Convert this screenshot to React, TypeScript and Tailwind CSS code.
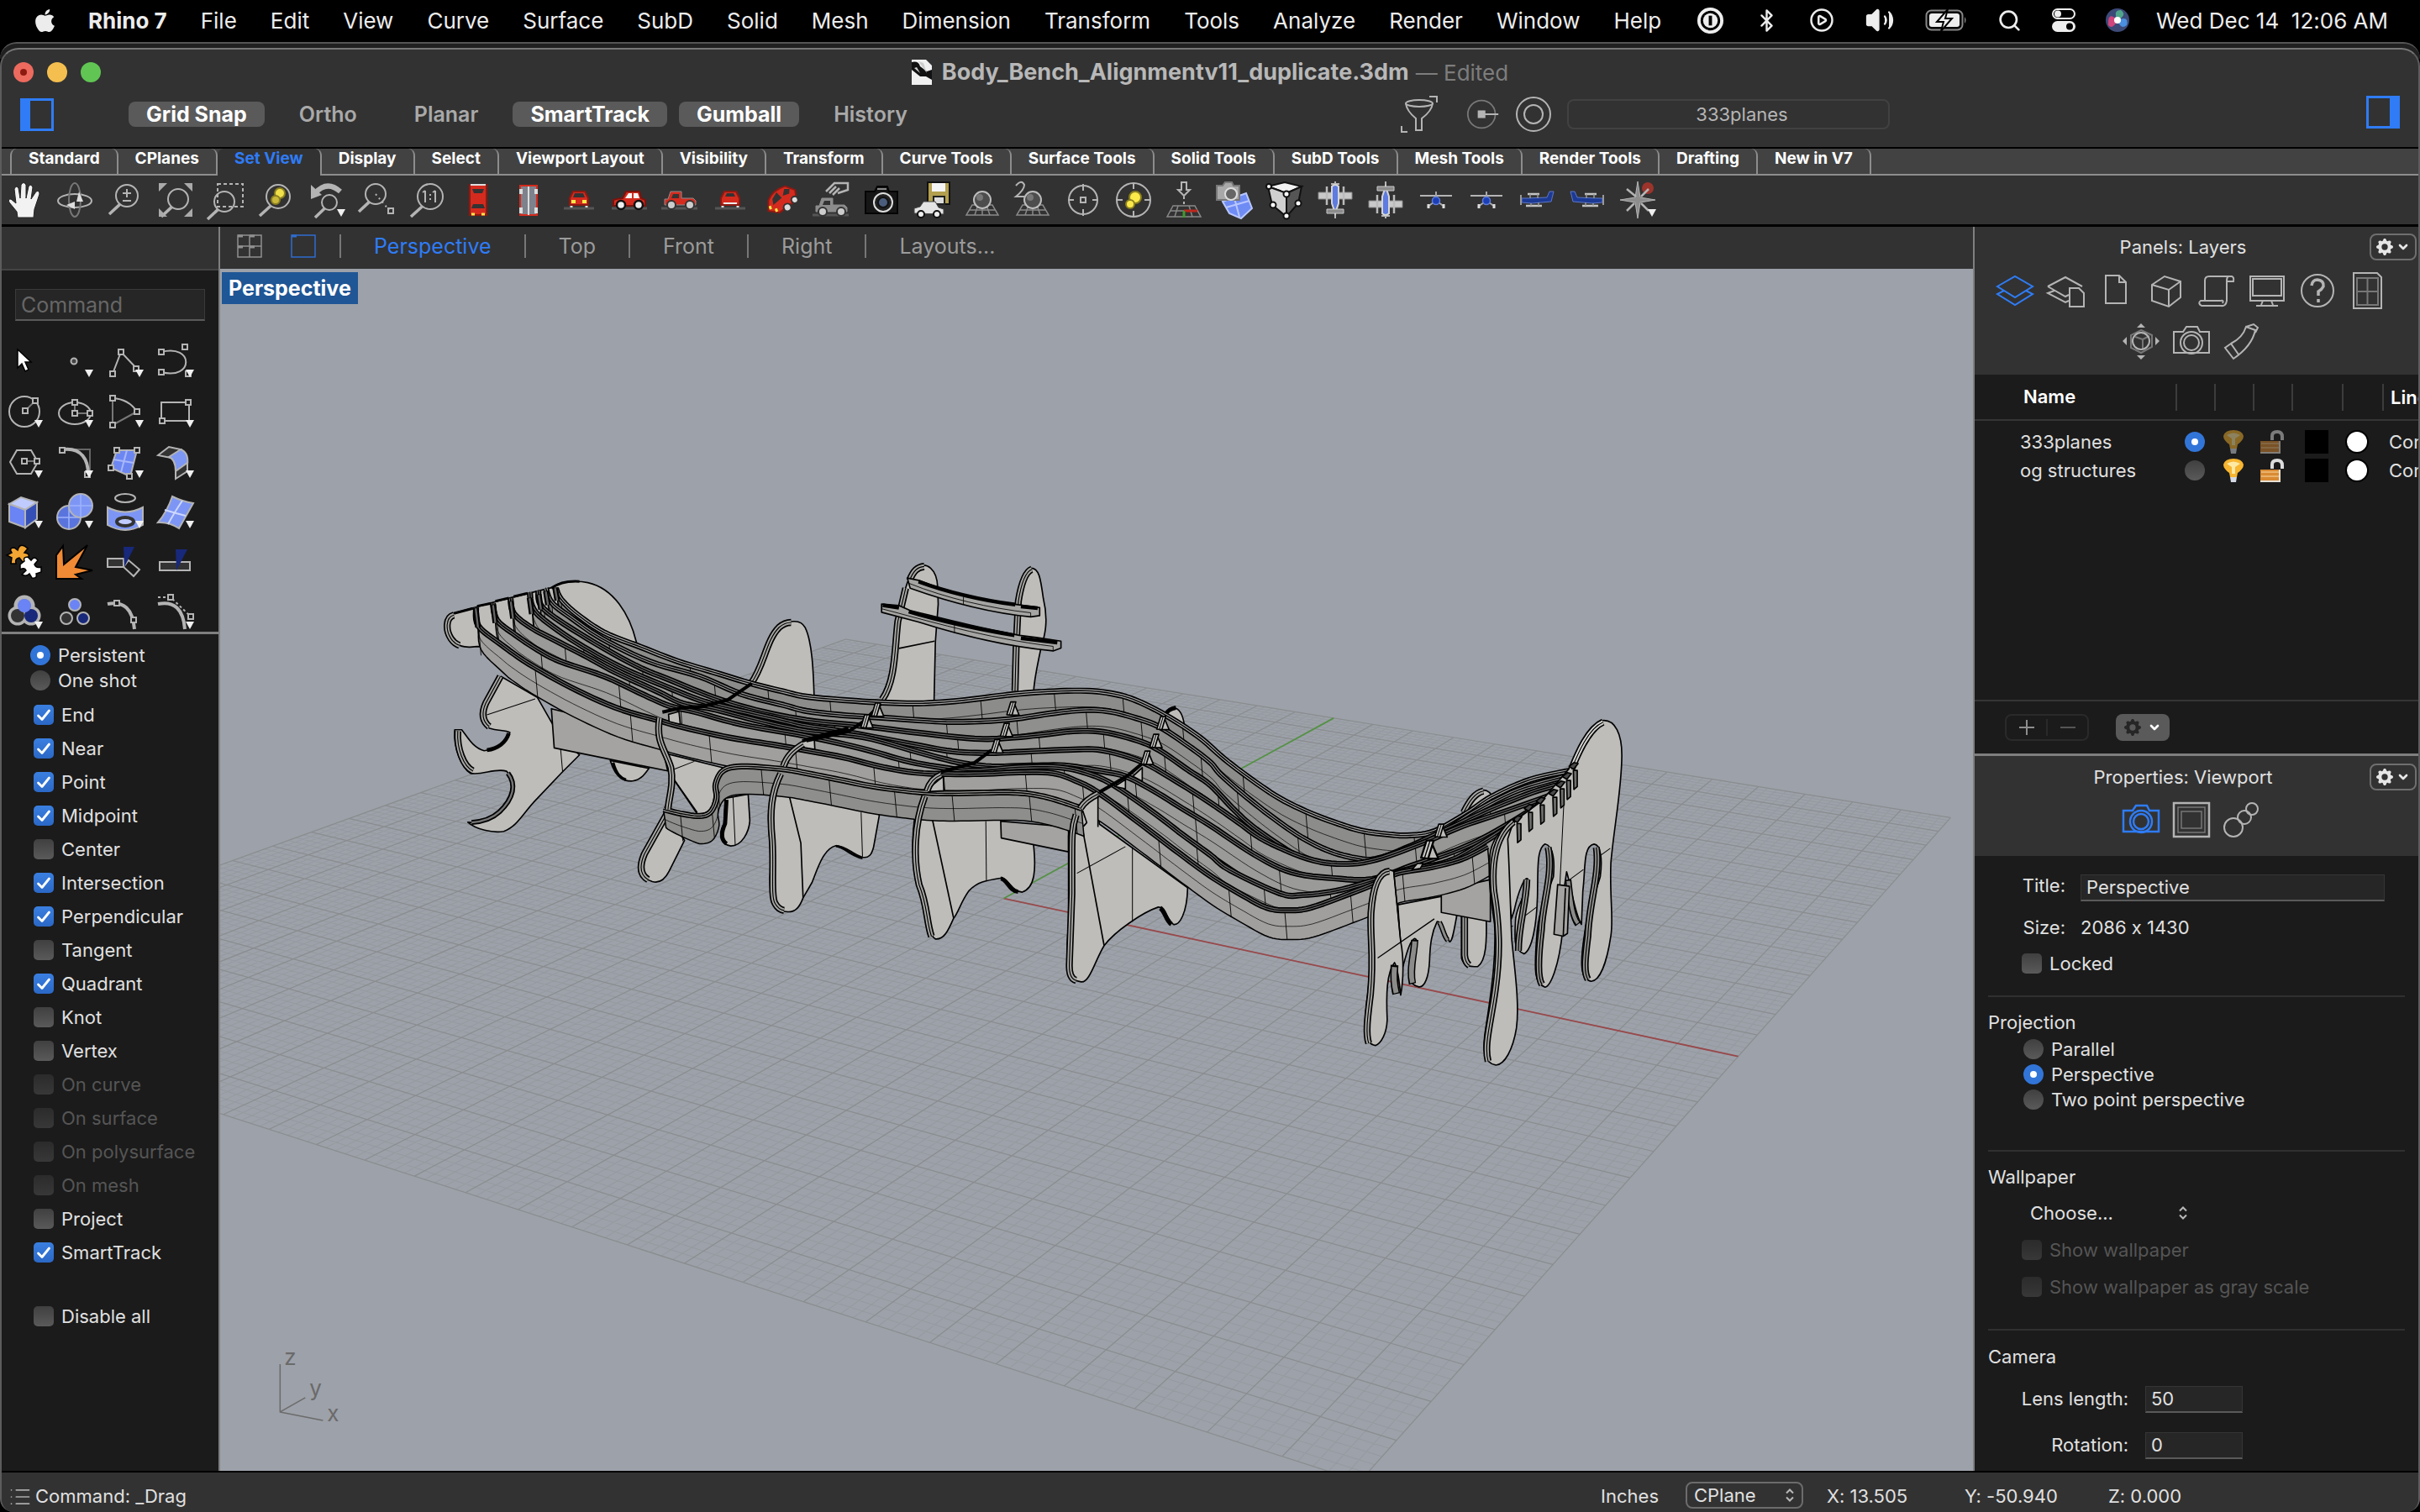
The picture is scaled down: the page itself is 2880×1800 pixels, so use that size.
import type { ReactNode } from 'react'
import { useState } from 'react'
import clsx from 'clsx'
import { Bluetooth, CirclePlay, Volume2, Search, ChevronDown, List } from 'lucide-react'
import { FaApple } from 'react-icons/fa'
import { BsGearFill } from 'react-icons/bs'

type Pt = [number, number]

const MENUS = ['File', 'Edit', 'View', 'Curve', 'Surface', 'SubD', 'Solid', 'Mesh', 'Dimension', 'Transform', 'Tools', 'Analyze', 'Render', 'Window', 'Help']

const TOOL_TABS = [
  'Standard', 'CPlanes', 'Set View', 'Display', 'Select', 'Viewport Layout', 'Visibility', 'Transform',
  'Curve Tools', 'Surface Tools', 'Solid Tools', 'SubD Tools', 'Mesh Tools', 'Render Tools', 'Drafting', 'New in V7',
]

const OSNAPS: { label: string; on?: boolean; disabled?: boolean }[] = [
  { label: 'End', on: true },
  { label: 'Near', on: true },
  { label: 'Point', on: true },
  { label: 'Midpoint', on: true },
  { label: 'Center' },
  { label: 'Intersection', on: true },
  { label: 'Perpendicular', on: true },
  { label: 'Tangent' },
  { label: 'Quadrant', on: true },
  { label: 'Knot' },
  { label: 'Vertex' },
  { label: 'On curve', disabled: true },
  { label: 'On surface', disabled: true },
  { label: 'On polysurface', disabled: true },
  { label: 'On mesh', disabled: true },
  { label: 'Project' },
  { label: 'SmartTrack', on: true },
]

/* ---------- form controls ---------- */

function Check({ label, on, disabled, className }: { label: string; on?: boolean; disabled?: boolean; className?: string }) {
  return (
    <label className={clsx('flex items-center gap-[9px]', disabled ? 'text-[#555]' : 'text-[#e0e0e0]', className)}>
      <span className="relative grid place-items-center">
        <input
          type="checkbox"
          defaultChecked={on}
          disabled={disabled}
          className="peer size-6 appearance-none rounded-[5px] bg-linear-to-b from-[#404040] to-[#5a5a5a] checked:from-[#3a7fe0] checked:to-[#2b68c6] disabled:from-[#2b2b2b] disabled:to-[#383838]"
        />
        <svg viewBox="0 0 24 24" className="pointer-events-none absolute hidden size-6 peer-checked:block">
          <path d="M5.500 13 L10 17.500 L18.500 7" fill="none" stroke="#fff" strokeWidth="2.800" strokeLinecap="round" strokeLinejoin="round" />
        </svg>
      </span>
      {label}
    </label>
  )
}

const radioClass =
  'size-6 shrink-0 appearance-none rounded-full bg-linear-to-b from-[#404040] to-[#5a5a5a] checked:border-[8px] checked:border-[#3275d8] checked:bg-white checked:bg-none'

function Radio({ label, name, on }: { label: string; name: string; on?: boolean }) {
  return (
    <label className="flex h-[30px] items-center gap-[9px] text-[#e0e0e0]">
      <input type="radio" name={name} defaultChecked={on} className={radioClass} />
      {label}
    </label>
  )
}

function UpDown() {
  return (
    <svg viewBox="0 0 12 18" className="h-[18px] w-3" fill="none" stroke="#b8b8b8" strokeWidth="2">
      <path d="M2 6.500 L6 2.500 L10 6.500 M2 11.500 L6 15.500 L10 11.500" />
    </svg>
  )
}

function GearButton({ label }: { label: string }) {
  return (
    <button aria-label={label} className="flex h-8 w-14 items-center justify-center gap-1 rounded-lg border-2 border-[#6f6f6f] text-[#e6e6e6]">
      <BsGearFill size={20} />
      <ChevronDown size={16} strokeWidth={4} />
    </button>
  )
}

/* ---------- icons ---------- */

function Ico({ label, children, sub, size = 'size-11' }: { label: string; children: ReactNode; sub?: boolean; size?: string }) {
  return (
    <button aria-label={label} className={clsx('shrink-0', size)}>
      <svg viewBox="0 0 44 44" className="size-full overflow-visible" fill="none" stroke="#b4b4b4" strokeWidth="2">
        {children}
        {sub && <path d="M34 33 H44 L39 42Z" fill="#f0f0f0" stroke="none" />}
      </svg>
    </button>
  )
}

function Lens({ cx = 24, cy = 17, r = 13 }: { cx?: number; cy?: number; r?: number }) {
  return (
    <>
      <circle cx={cx} cy={cy} r={r} />
      <path d={`M${cx - r * 0.65} ${cy + r * 0.8} L${cx - r - 8} ${cy + r + 9}`} strokeWidth="3.500" />
    </>
  )
}

function SideCar() {
  return (
    <g stroke="none">
      <path d="M1 32 H43" stroke="#555" strokeWidth="3" />
      <path d="M3 29 V22 Q10 20 14 20 L18 12 H34 L36 20 L41 22 V29Z" fill="#d42b1e" stroke="#7c130c" />
      <path d="M17 20 L21 14 H25 V20Z M27 20 V14 H32 L34 20Z" fill="#f5f5f5" />
      <circle cx="12" cy="28" r="5" fill="#eee" stroke="#111" strokeWidth="2.500" />
      <circle cx="33" cy="28" r="5" fill="#eee" stroke="#111" strokeWidth="2.500" />
    </g>
  )
}

function Truck({ color = '#d42b1e', y = 0 }: { color?: string; y?: number }) {
  return (
    <g transform={`translate(0 ${y})`}>
      <path d="M0 32 H43" stroke="#555" strokeWidth="3" />
      <path d="M4 28 V21 H8 L11 12 H24 V20 H38 L41 23 V28Z" fill={color} stroke="#8c8c8c" strokeWidth="1" />
      <path d="M12 20 L14 15 H21 V20Z" fill="#333" stroke="none" />
      <circle cx="12" cy="28" r="5" fill="#ccc" stroke="#333" />
      <circle cx="34" cy="28" r="5" fill="#ccc" stroke="#333" />
    </g>
  )
}

function Ball() {
  return (
    <>
      <path d="M10 28 H34 L41 40 H3Z M7 34 H37 M17 28 L13 40 M22 28 V40 M27 28 L31 40" stroke="#8a8a8a" strokeWidth="1.500" />
      <circle cx="22" cy="22" r="10" fill="#4d4d4d" stroke="#bdbdbd" />
      <circle cx="19" cy="19" r="4" fill="#777" stroke="none" />
    </>
  )
}

function FrontPlane() {
  return (
    <>
      <path d="M3 17 H41" strokeWidth="2" />
      <path d="M22 12 V22 M19 25 L12 30 M25 25 L32 30" stroke="#a8a8a8" strokeWidth="2" />
      <circle cx="22" cy="23" r="4.500" fill="#1c3fb4" stroke="#5d7be0" strokeWidth="1.500" />
      <path d="M13 27 V32 M31 27 V32" stroke="#ddd" strokeWidth="3" />
    </>
  )
}

function SidePlane({ flip }: { flip?: boolean }) {
  return (
    <g transform={flip ? 'translate(44 0) scale(-1 1)' : undefined}>
      <path d="M4 20 H10 L34 19 L37 12 H42 L39 24 L16 26 L4 25Z" fill="#1c3a94" stroke="#5d77c8" strokeWidth="1" />
      <path d="M11 15 H25 M9 29 H28" stroke="#c4c4c4" strokeWidth="2.500" />
      <path d="M14 15 V20 M23 15 V20 M15 26 V29 M24 25 V29" stroke="#999" strokeWidth="1.500" />
      <path d="M3 16 V28" stroke="#999" />
    </g>
  )
}

function TopPlane({ up }: { up?: boolean }) {
  return (
    <g transform={up ? 'rotate(180 22 22)' : undefined}>
      <path d="M17 3 H27 M22 0 V44" strokeWidth="2" />
      <path d="M2 13 H42 V21 H2Z" fill="#c9c9c9" stroke="#888" strokeWidth="1" />
      <path d="M12 6 V28 M32 6 V28" stroke="#bbb" strokeWidth="2.500" />
      <path d="M18 6 Q22 2 26 6 L26 26 L22 38 L18 26Z" fill="#5d7be0" stroke="#d5d5d5" />
      <path d="M12 33 H32 V38 H12Z" fill="#8b8b8b" stroke="#c9c9c9" strokeWidth="1" />
    </g>
  )
}

const VIEW_TOOLS: { label: string; sub?: boolean; art: ReactNode }[] = [
  {
    label: 'Pan view',
    art: <path d="M14 43 L13 36 L4 25 Q2 21 6 21 L12 26 L10 9 Q12 4 15 8 L17 20 L18 4 Q21 -1 24 4 L24 20 L27 6 Q30 2 32 7 L30 21 L36 12 Q40 10 40 15 L34 33 L33 43Z" fill="#f2f2f2" stroke="#222" strokeWidth="1" />,
  },
  {
    label: 'Rotate view',
    art: (
      <>
        <ellipse cx="22" cy="23" rx="20" ry="8" />
        <ellipse cx="22" cy="22" rx="7" ry="20" stroke="#777" />
        <path d="M27 12 L32 24 L24 24Z M22 24 L12 28 L22 33Z" fill="#ddd" stroke="none" />
      </>
    ),
  },
  { label: 'Zoom dynamic', art: <><Lens /><path d="M19 14 H29 M24 9 V19 M19 23 H29" /></> },
  { label: 'Zoom extents', art: <><Lens cx={25} cy={21} r={12} /><path d="M2 2 H12 L2 12Z M42 2 V12 L32 2Z M2 42 V32 L12 42Z M42 42 H32 L42 32Z" fill="#aaa" stroke="none" /></> },
  { label: 'Zoom window', art: <><Lens cx={20} cy={24} r={12} /><path d="M12 3 H42 V30 H12Z" strokeDasharray="4 3" /></> },
  { label: 'Zoom selected', art: <><Lens cx={24} cy={18} r={14} /><circle cx="26" cy="14" r="6" fill="#f0e04a" stroke="#8a7f1f" /><circle cx="21" cy="22" r="5" fill="#c9b83a" stroke="#8a7f1f" /></> },
  {
    label: 'Undo view change',
    sub: true,
    art: <><Lens cx={25} cy={25} r={9} /><path d="M8 14 Q22 -2 38 12" strokeWidth="6" /><path d="M3 4 L16 16 L3 21Z" fill="#b4b4b4" stroke="none" /></>,
  },
  { label: 'Zoom target', art: <><Lens cx={20} cy={15} r={12} /><path d="M20 15 L36 34" strokeDasharray="2 4" /><path d="M35 32 H41 V38 H35Z" /></> },
  { label: 'Zoom 1 to 1', art: <><Lens cx={25} cy={18} r={15} /><path d="M19 11 V25 M31 11 V25 M16 13 L19 11 M28 13 L31 11 M25 15 V17 M25 20 V22" /></> },
  {
    label: 'Top view',
    art: (
      <>
        <path d="M12 4 H32 V40 H12Z" fill="#d42b1e" stroke="#8c1a12" />
        <path d="M15 9 H29 L27 14 H17Z M16 27 H28 L30 32 H14Z" fill="#333" stroke="none" />
        <path d="M13 4 H31" stroke="#ddd" />
        <path d="M14 39 H18 M26 39 H30" stroke="#f7e948" strokeWidth="3" />
      </>
    ),
  },
  {
    label: 'Bottom view',
    art: (
      <>
        <path d="M12 5 H32 V40 H12Z" fill="#7e828c" stroke="#d42b1e" />
        <path d="M22 6 V40" stroke="#ddd" />
        <path d="M13 9 V15 M31 9 V15 M13 31 V38 M31 31 V38" stroke="#ddd" strokeWidth="4" />
      </>
    ),
  },
  {
    label: 'Front view',
    art: (
      <>
        <path d="M4 32 H40" stroke="#555" strokeWidth="3" />
        <path d="M13 27 V31 M31 27 V31" stroke="#ddd" strokeWidth="3" />
        <path d="M11 28 V20 L15 12 H29 L33 20 V28Z" fill="#d42b1e" stroke="#8c1a12" />
        <path d="M15 19 L17 14 H27 L29 19Z" fill="#333" stroke="none" />
        <path d="M13 24 H18 M26 24 H31" stroke="#f7e948" strokeWidth="4" />
      </>
    ),
  },
  { label: 'Right view', art: <SideCar /> },
  { label: 'Left view', art: <Truck /> },
  {
    label: 'Back view',
    art: (
      <>
        <path d="M4 32 H40" stroke="#555" strokeWidth="3" />
        <path d="M13 27 V31 M31 27 V31" stroke="#ddd" strokeWidth="3" />
        <path d="M11 28 V20 L15 12 H29 L33 20 V28Z" fill="#d42b1e" stroke="#8c1a12" />
        <path d="M16 18 L18 14 H26 L28 18Z" fill="#333" stroke="none" />
        <path d="M14 26 H30" stroke="#eee" />
      </>
    ),
  },
  {
    label: 'Perspective view',
    art: (
      <g transform="rotate(-18 22 22)">
        <path d="M4 30 L8 18 Q16 8 32 8 L42 16 L40 28 L16 36Z" fill="#d42b1e" stroke="#8c1a12" />
        <path d="M13 18 L20 12 L24 20 L12 25Z" fill="#333" stroke="none" />
        <path d="M26 18 L30 11 L36 13 L34 18Z" fill="#333" stroke="none" />
        <circle cx="27" cy="33" r="4.500" fill="#ddd" stroke="#333" />
        <circle cx="38" cy="27" r="4" fill="#ddd" stroke="#333" />
        <path d="M6 27 H9 M12 32 H15" stroke="#f7e948" strokeWidth="4" />
      </g>
    ),
  },
  { label: 'Place camera', art: <><Truck color="#8c8c8c" y={8} /><path d="M16 12 L26 2 H42 V10 L30 14 M20 14 L28 6 M24 16 L32 8" strokeWidth="2.500" /></> },
  {
    label: 'Named views',
    art: (
      <>
        <path d="M3 12 H14 L17 6 H29 L31 12 H41 V38 H3Z" fill="#161616" stroke="#050505" />
        <path d="M17 9 H28" stroke="#888" />
        <circle cx="24" cy="25" r="11" fill="#222" stroke="#ddd" />
        <circle cx="24" cy="25" r="6" fill="#4b5d7c" stroke="#111" />
      </>
    ),
  },
  {
    label: 'Save view',
    art: (
      <>
        <path d="M17 1 H43 V27 H17Z" fill="#b39f4e" stroke="#111" />
        <path d="M22 2 H38 V12 H22Z" fill="#f5f5f5" stroke="none" />
        <path d="M24 18 H37 V27 H24Z" fill="#ddd" stroke="#222" />
        <path d="M1 38 V32 L8 30 L12 24 H26 L30 31 L36 33 V39Z" fill="#e4e4e4" stroke="#444" strokeWidth="1" />
        <circle cx="9" cy="39" r="4" fill="#eee" stroke="#111" />
        <circle cx="28" cy="39" r="4" fill="#eee" stroke="#111" />
      </>
    ),
  },
  { label: 'One point perspective', art: <Ball /> },
  { label: 'Two point perspective', art: <><Ball /><path d="M2 5 Q9 -3 12 4 Q12 10 2 18 H14" /></> },
  { label: 'Set target', art: <><circle cx="22" cy="22" r="17" /><path d="M22 3 V11 M22 33 V41 M4 22 H11 M33 22 H40 M19 19 H25 V25 H19Z" /></> },
  { label: 'Target selected', art: <><circle cx="22" cy="22" r="20" /><path d="M22 2 V9 M22 35 V42 M2 22 H9 M35 22 H42" /><circle cx="24" cy="19" r="7" fill="#fbe94a" stroke="#8a7f1f" /><circle cx="18" cy="27" r="5" fill="#fbe94a" stroke="#8a7f1f" /></> },
  {
    label: 'Plan view',
    art: (
      <>
        <path d="M19 1 H25 V10 H29 L22 17 L15 10 H19Z" />
        <path d="M22 18 V28" strokeDasharray="3 3" />
        <path d="M9 29 H35 L42 42 H2Z M6 35 H38 M15 29 L11 42 M28 29 L32 42" stroke="#888" strokeWidth="1.500" />
        <path d="M22 35 H38" stroke="#c0261c" strokeWidth="3" />
        <path d="M22 35 V43" stroke="#3f9a2f" strokeWidth="3" />
      </>
    ),
  },
  {
    label: 'Camera from surface',
    art: (
      <>
        <path d="M8 24 L36 14 L43 32 L30 44 L16 38Z" fill="#6f8cf5" stroke="#b9c7ff" />
        <path d="M12 31 L40 23 M22 20 L28 42" stroke="#b9c7ff" />
        <path d="M1 5 H8 L11 1 H19 L21 5 H28 V22 H1Z" fill="#a8a8a8" stroke="#777" />
        <circle cx="18" cy="15" r="7" fill="#666" stroke="#ddd" />
      </>
    ),
  },
  {
    label: 'Match perspective',
    art: (
      <>
        <path d="M2 6 L22 1 L42 6 L24 14Z" fill="#f2f2f2" stroke="#111" />
        <path d="M2 6 L24 14 V42 L7 28Z" fill="#cfcfcf" stroke="#111" />
        <path d="M42 6 L24 14 V42 L38 26Z" fill="#555" stroke="#111" />
        <g fill="#fff" stroke="#111">
          <circle cx="3" cy="6" r="3" /><circle cx="24" cy="15" r="3.500" /><circle cx="8" cy="28" r="3.500" /><circle cx="38" cy="26" r="3.500" /><circle cx="24" cy="41" r="3.500" />
        </g>
      </>
    ),
  },
  { label: 'Plane top', art: <TopPlane /> },
  { label: 'Plane bottom', art: <TopPlane up /> },
  { label: 'Plane front', art: <FrontPlane /> },
  { label: 'Plane back', art: <FrontPlane /> },
  { label: 'Plane right', art: <SidePlane /> },
  { label: 'Plane left', art: <SidePlane flip /> },
  {
    label: 'Sun direction',
    sub: true,
    art: (
      <>
        <circle cx="34" cy="8" r="7" fill="#9c342c" stroke="none" />
        <path d="M22 0 L25 19 L43 22 L25 25 L22 44 L19 25 L1 22 L19 19Z" fill="#8d8d8d" strokeWidth="1" />
        <path d="M9 9 L20 18 M35 9 L26 18 M9 35 L18 26 M35 35 L26 26" strokeWidth="2.500" />
      </>
    ),
  },
]

/* small square grip used all over the palette icons */
function Grip({ x, y }: { x: number; y: number }) {
  return <rect x={x - 3} y={y - 3} width="6" height="6" fill="#1b1b1b" />
}

const PALETTE: { label: string; sub?: boolean; art: ReactNode }[] = [
  { label: 'Select', art: <path d="M14 9 L30 24 L23 24 L27 33 L23 35 L19 26 L14 31Z" fill="#fff" stroke="#000" strokeWidth="1.500" /> },
  { label: 'Point', sub: true, art: <circle cx="21" cy="23" r="3.500" fill="#444" /> },
  { label: 'Polyline', sub: true, art: <><path d="M7 38 L17 12 L36 32" /><Grip x={7} y={38} /><Grip x={17} y={12} /><Grip x={35} y={32} /></> },
  { label: 'Curve', sub: true, art: <><path d="M5 12 C44 2 44 46 5 36" /><Grip x={5} y={12} /><Grip x={5} y={36} /><Grip x={33} y={6} /><Grip x={37} y={38} /></> },
  { label: 'Circle', sub: true, art: <><circle cx="22" cy="23" r="18" /><path d="M23 22 L35 10" stroke="#777" /><Grip x={23} y={22} /><Grip x={35} y={10} /></> },
  { label: 'Ellipse', sub: true, art: <><ellipse cx="22" cy="25" rx="19" ry="13" /><path d="M22 12 V25 H40" stroke="#777" /><Grip x={22} y={12} /><Grip x={22} y={25} /><Grip x={40} y={25} /></> },
  { label: 'Arc', sub: true, art: <><path d="M7 7 Q26 8 36 23" /><path d="M7 7 V39 L36 23" stroke="#777" /><Grip x={7} y={7} /><Grip x={7} y={39} /><Grip x={36} y={23} /></> },
  { label: 'Rectangle', sub: true, art: <><rect x="5" y="12" width="33" height="22" /><Grip x={37} y={12} /><Grip x={6} y={34} /></> },
  { label: 'Polygon', sub: true, art: <><path d="M5 23 L13 9 H30 L38 23 L30 37 H13Z" /><path d="M22 22 H38" stroke="#777" /><Grip x={22} y={22} /><Grip x={37} y={22} /></> },
  { label: 'Fillet', sub: true, art: <><path d="M9 8 H40 V40" stroke="#666" /><path d="M9 8 C30 6 38 20 38 38" strokeWidth="4" /><Grip x={7} y={9} /><Grip x={37} y={38} /></> },
  { label: 'Surface', sub: true, art: <><path d="M12 9 H36 L28 40 L5 30Z" fill="#6d87f2" /><path d="M8 20 L32 24 M24 9 L17 35" stroke="#a9b8fa" /><Grip x={12} y={9} /><Grip x={36} y={9} /><Grip x={5} y={30} /><Grip x={27} y={40} /></> },
  { label: 'Sweep', sub: true, art: <><path d="M1 15 L14 5 L28 8 L16 18Z" fill="#333" /><path d="M28 8 Q38 12 36 26 L22 34 Q22 20 14 17Z" fill="#7d97f5" /><path d="M22 34 L36 24 V34 L22 43Z" fill="#333" /></> },
  { label: 'Box', sub: true, art: <><path d="M4 13 L18 5 L37 11 L23 20Z" fill="#c0ccff" /><path d="M4 13 L23 20 V41 L4 34Z" fill="#6a83f5" /><path d="M37 11 L23 20 V41 L37 31Z" fill="#3550b5" /></> },
  { label: 'Sphere', sub: true, art: <><circle cx="15" cy="29" r="14" fill="#5a74dd" /><path d="M15 15 V43 M1 29 H29" stroke="#9fb2fb" strokeWidth="1.500" /><circle cx="29" cy="15" r="14" fill="#7d96f5" /><path d="M29 1 V29 M15 15 H43" stroke="#9fb2fb" strokeWidth="1.500" /></> },
  { label: 'Revolve', sub: true, art: <><ellipse cx="22" cy="6" rx="12" ry="5" /><path d="M1 17 Q22 28 43 17 V38 Q22 50 1 38Z" fill="#7d96f5" /><ellipse cx="22" cy="34" rx="10" ry="5" fill="#c0ccff" stroke="#333" strokeWidth="4" /></> },
  { label: 'Mesh', sub: true, art: <><path d="M18 4 Q30 10 43 12 L26 42 Q14 34 1 35 Q12 22 18 4Z" fill="#7d96f5" /><path d="M9 20 Q22 24 34 27 M30 9 Q20 24 13 37" stroke="#cdd7ff" /></> },
  {
    label: 'Join',
    art: (
      <>
        <path d="M1 14 L7 11 Q3 5 10 5 L14 8 Q16 0 22 3 L26 6 L22 11 Q30 12 26 18 L20 22 L16 17 Q10 18 12 24 L6 24 L7 17Z" fill="#f2a532" stroke="#000" strokeWidth="1.500" />
        <path d="M17 25 L22 21 Q20 16 26 16 L30 20 Q34 14 38 20 L34 25 Q36 30 42 28 L42 34 L36 36 Q38 42 31 41 L28 36 Q24 40 19 37 L24 32 Q22 28 17 31Z" fill="#fff" stroke="#000" strokeWidth="1.500" />
      </>
    ),
  },
  { label: 'Explode', art: <path d="M0 42 V14 L8 3 L9 25 L37 2 L23 28 L43 32 L23 37 L30 42Z" fill="#f08a35" stroke="#000" /> },
  { label: 'Trim', art: <><path d="M1 18 H20 V28 H1Z" fill="#333" /><path d="M26 20 L39 31 L32 39 L20 28Z" /><path d="M20 4 H33 L21 28Z" fill="#18287a" stroke="none" /></> },
  { label: 'Split', art: <><path d="M3 22 H39 V32 H3Z" fill="#333" /><path d="M22 7 H36 L23 32Z" fill="#18287a" stroke="none" /></> },
  { label: 'Group', sub: true, art: <><g strokeWidth="5"><circle cx="22" cy="14" r="10" /><circle cx="14" cy="26" r="9" /><circle cx="30" cy="26" r="9" /></g><circle cx="14" cy="26" r="8" fill="#333" stroke="none" /><circle cx="30" cy="26" r="8" fill="#18287a" stroke="none" /><circle cx="22" cy="14" r="8" fill="#6a83f5" stroke="none" /></> },
  { label: 'Ungroup', art: <><circle cx="22" cy="13" r="7" fill="#6a83f5" /><circle cx="12" cy="29" r="7" fill="#333" /><circle cx="32" cy="29" r="7" fill="#18287a" /></> },
  { label: 'Edit points', art: <><path d="M1 12 Q30 6 33 42" strokeWidth="4" /><Grip x={12} y={11} /><Grip x={32} y={31} /></> },
  { label: 'Control points', sub: true, art: <><path d="M1 12 Q30 6 33 42" strokeWidth="4" /><path d="M1 4 H16 L40 27" strokeDasharray="3 3" /><Grip x={16} y={4} /><Grip x={40} y={27} /></> },
]

const PANEL_ICONS: { label: string; active?: boolean; art: ReactNode }[] = [
  { label: 'Layers', active: true, art: <path d="M1 17 L22 5 L43 17 L22 30Z M9 22 L1 26 L22 39 L43 26 L35 22" /> },
  { label: 'Layer states', art: <><path d="M1 17 L22 6 L42 17 M1 17 L22 29 L26 27 M9 22 L1 25 L22 36 L26 34" /><path d="M27 19 H38 L44 25 V41 H27Z" /></> },
  { label: 'Notes', art: <path d="M10 4 H26 L34 12 V37 H10Z M26 4 V12 H34" /> },
  { label: 'Object', art: <path d="M5 15 L20 5 L39 11 V30 L25 41 L5 34Z M5 15 L25 21 L39 11 M25 21 V41" /> },
  { label: 'Script', art: <path d="M8 34 V10 Q8 5 13 5 H40 Q43 6 42 11 H34 Q34 6 36 5 M34 11 V34 Q33 41 27 40 H4 Q-1 37 3 34 H27 Q31 33 29 37" /> },
  { label: 'Display', art: <path d="M2 5 H42 V34 H2Z M5 8 H39 V28 H5Z M17 34 L15 39 M27 34 L29 39 M9 40 H35" /> },
  { label: 'Help', art: <><circle cx="22" cy="22" r="19" /><path d="M15 16 Q16 9 22 9 Q30 10 29 17 Q27 21 23 23 V28 M23 32 V36" strokeWidth="3.500" /></> },
  { label: 'Page layout', art: <><path d="M5 1 H33 L38 6 V43 H5Z" /><path d="M9 7 H34 V39 H9Z M21.500 7 V39 M9 23 H34" stroke="#777" /></> },
]

const PANEL_ICONS_2: { label: string; art: ReactNode }[] = [
  { label: 'Block', art: <><path d="M22 9 L35 15 V29 L22 36 L10 30 V15Z M15 17 L24 20 V32 M24 20 L32 16" stroke="#777" /><circle cx="22" cy="22" r="10" /><path d="M17 6 H27 L22 1Z M17 39 H27 L22 44Z M5 17 V27 L0 22Z M39 17 V27 L44 22Z" fill="#b4b4b4" stroke="none" /></> },
  { label: 'Named view camera', art: <Camera /> },
  { label: 'Materials', art: <><path d="M9 25 Q23 18 27 5 L38 9 Q34 28 12 43 L2 30Z M9 25 L18 38 M27 5 L36 2 L41 6 L38 12" /></> },
]

function Camera() {
  return (
    <>
      <path d="M1 11 H12 L16 5 H29 L32 11 H43 V36 H1Z" />
      <circle cx="22" cy="24" r="13" />
      <circle cx="22" cy="24" r="9" />
    </>
  )
}

/* ---------- viewport scene ---------- */

// ground plane -> screen, u and v run from -1 to 1 over the grid extents
function project(u: number, v: number): Pt {
  const w = -0.14455 * u + 0.24007 * v + 1
  return [(574.4 * u + 773.3 * v + 1194.7) / w, (6.3 * u - 9.36 * v + 1069) / w]
}

function seg(a: Pt, b: Pt) {
  return `M${a[0].toFixed(1)} ${a[1].toFixed(1)}L${b[0].toFixed(1)} ${b[1].toFixed(1)}`
}

function Grid() {
  let minor = ''
  let major = ''
  for (let i = -70; i <= 70; i++) {
    const t = i / 70
    const d = seg(project(t, -1), project(t, 1)) + seg(project(-1, t), project(1, t))
    if (i % 5 === 0) major += d
    else minor += d
  }
  return (
    <g fill="none">
      <path d={minor} stroke="#959aa0" strokeWidth="1" />
      <path d={major} stroke="#898d8f" strokeWidth="1.200" />
      <path d={seg(project(0, 0), project(1, 0))} stroke="#98494b" strokeWidth="1.800" />
      <path d={seg(project(0, 0), project(0, 1))} stroke="#559246" strokeWidth="1.800" />
    </g>
  )
}

function spline(pts: Pt[], steps = 6): Pt[] {
  const out: Pt[] = []
  for (let i = 0; i < pts.length - 1; i++) {
    const p0 = pts[Math.max(0, i - 1)]
    const p1 = pts[i]
    const p2 = pts[i + 1]
    const p3 = pts[Math.min(pts.length - 1, i + 2)]
    for (let s = 0; s < steps; s++) {
      const t = s / steps
      const f = (k: 0 | 1) =>
        0.5 * (2 * p1[k] + (p2[k] - p0[k]) * t + (2 * p0[k] - 5 * p1[k] + 4 * p2[k] - p3[k]) * t * t + (3 * p1[k] - p0[k] - 3 * p2[k] + p3[k]) * t * t * t)
      out.push([f(0), f(1)])
    }
  }
  out.push(pts[pts.length - 1])
  return out
}

const line = (pts: Pt[]) => 'M' + pts.map((p) => `${p[0].toFixed(1)} ${p[1].toFixed(1)}`).join('L')

function Slat({ pts, fill, depth = 35, edge = '#686868' }: { pts: Pt[]; fill: string; depth?: number; edge?: string }) {
  const top = spline(pts)
  const low = top.map(([x, y], i): Pt => [x + 3, y + Math.min(depth, 22 + i)])
  const mid = top.map(([x, y], i): Pt => [x + 2, y + Math.min(depth, 22 + i) * 0.55])
  const ticks = top.filter((_, i) => i % 13 === 6).map(([x, y]) => seg([x, y], [x + 3, y + depth])).join('')
  return (
    <g fill="none" stroke="#000">
      <path d={line([...top, ...low.slice().reverse()]) + 'Z'} fill={fill} strokeWidth="1.500" />
      <path d={line(mid)} strokeWidth="0.700" />
      <path d={ticks} strokeWidth="0.900" />
      <path d={line(top)} strokeWidth="7.200" />
      <path d={line(top)} stroke={edge} strokeWidth="3.800" />
      <path d={line(top)} strokeWidth="1.400" />
    </g>
  )
}

const SLATS: { fill: string; edge?: string; pts: Pt[] }[] = [
  {
    fill: '#8c8c8a',
    edge: '#a4a4a4',
    pts: [
      [662, 700], [668, 713], [687, 731], [720, 753], [763, 770], [807, 787], [850, 800], [893, 813], [933, 823], [960, 829], [1003, 833], [1050, 836], [1093, 837], [1130, 835], [1167, 831], [1207, 826],
      [1247, 823], [1293, 822], [1327, 826], [1353, 834], [1387, 851], [1427, 877], [1457, 903], [1490, 928], [1523, 950], [1560, 968], [1598, 982], [1623, 989], [1653, 993], [1678, 994], [1707, 989],
      [1745, 968], [1775, 948], [1820, 928], [1868, 917],
    ],
  },
  {
    fill: '#8f8f8d',
    edge: '#8e8e8e',
    pts: [
      [650, 700], [657, 717], [680, 735], [717, 760], [773, 787], [833, 805], [883, 826], [933, 839], [960, 846], [1003, 851], [1050, 854], [1093, 857], [1133, 859], [1173, 858], [1210, 855], [1250, 849],
      [1287, 845], [1317, 846], [1347, 853], [1380, 865], [1415, 888], [1440, 907], [1453, 922], [1483, 948], [1515, 973], [1550, 997], [1583, 1013], [1613, 1021], [1637, 1022], [1680, 1008], [1717, 990],
      [1757, 965], [1807, 940], [1862, 924],
    ],
  },
  {
    fill: '#959593',
    pts: [
      [641, 703], [648, 725], [700, 760], [757, 792], [800, 810], [850, 830], [900, 845], [960, 857], [1027, 864], [1093, 872], [1160, 879], [1200, 878], [1243, 874], [1277, 870], [1313, 871], [1353, 881],
      [1380, 893], [1415, 917], [1440, 934], [1468, 963], [1490, 983], [1523, 1006], [1550, 1021], [1590, 1029], [1633, 1024], [1680, 1006], [1730, 983], [1773, 963], [1823, 943], [1857, 933],
    ],
  },
  {
    fill: '#979795',
    pts: [
      [631, 705], [634, 722], [647, 737], [687, 765], [737, 793], [783, 813], [833, 833], [870, 843], [930, 857], [960, 864], [1013, 872], [1093, 887], [1133, 894], [1177, 896], [1227, 894], [1277, 892],
      [1313, 893], [1360, 907], [1407, 934], [1440, 955], [1473, 978], [1505, 1000], [1557, 1022], [1597, 1028], [1637, 1023], [1693, 1003], [1740, 983], [1790, 966], [1849, 945],
    ],
  },
  {
    fill: '#9a9a98',
    pts: [
      [608, 712], [612, 730], [633, 747], [667, 765], [700, 782], [733, 800], [783, 823], [813, 837], [850, 844], [900, 857], [960, 870], [1027, 877], [1093, 895], [1140, 907], [1180, 912], [1227, 911],
      [1267, 911], [1307, 917], [1340, 924], [1373, 941], [1407, 962], [1440, 982], [1493, 1017], [1537, 1038], [1587, 1045], [1633, 1046], [1680, 1030], [1730, 1013], [1773, 993], [1833, 957],
    ],
  },
  {
    fill: '#9c9c9a',
    pts: [
      [587, 718], [592, 738], [613, 755], [640, 773], [667, 787], [720, 805], [767, 827], [797, 840], [827, 847], [883, 862], [960, 876], [1027, 891], [1077, 905], [1120, 913], [1160, 917], [1213, 913],
      [1260, 913], [1293, 920], [1325, 934], [1377, 970], [1407, 993], [1440, 1017], [1463, 1035], [1523, 1063], [1550, 1065], [1590, 1060], [1633, 1048], [1673, 1035], [1717, 1027], [1753, 1010], [1820, 967],
    ],
  },
  {
    fill: '#a09f9d',
    pts: [
      [567, 723], [570, 745], [597, 767], [630, 790], [680, 818], [733, 842], [783, 857], [820, 867], [870, 878], [920, 886], [960, 893], [1003, 901], [1047, 912], [1087, 919], [1123, 921], [1167, 921],
      [1213, 919], [1253, 920], [1280, 929], [1307, 943], [1353, 977], [1403, 1015], [1440, 1042], [1473, 1062], [1507, 1080], [1533, 1083], [1560, 1080], [1607, 1063], [1640, 1050], [1663, 1039], [1703, 1032],
      [1740, 1022], [1770, 1007],
    ],
  },
]

const LOW_SLAT: Pt[] = [
  [790, 963], [810, 968], [833, 971], [846, 966], [853, 950], [852, 933], [861, 917], [883, 912], [930, 915], [960, 920], [1000, 928], [1035, 935], [1070, 940], [1100, 943], [1133, 944], [1188, 943], [1220, 944],
  [1247, 949], [1273, 957], [1287, 962],
]

// strip of plate thickness: dark outline, lit face, centre seam
function Rim({ d, tone = '#a6a6a4' }: { d: string; tone?: string }) {
  return (
    <g fill="none" stroke="#000">
      <path d={d} strokeWidth="25" />
      <path d={d} stroke={tone} strokeWidth="15" />
      <path d={d} strokeWidth="3.500" />
    </g>
  )
}

function Stub({ x, y }: { x: number; y: number }) {
  return (
    <g transform={`translate(${x} ${y})`} stroke="#000" strokeWidth="5">
      <path d="M8 -20 L26 22 L-2 22Z" fill="#bdbcb9" />
      <path d="M-18 20 L-4 -24 H14 L0 22Z" fill="#c8c8c6" />
      <path d="M-9 20 L5 -24" strokeWidth="3" />
    </g>
  )
}

const PLATE = '#bebdba'

function HeadBack() {
  return (
    <g transform="translate(500 650) scale(0.33333)" stroke="#000" strokeWidth="5" fill={PLATE}>
      <path d="M120 240 L300 190 L470 148 C500 125 560 122 600 130 C690 150 750 240 775 350 L600 380 L205 358 L180 360 C130 362 105 330 100 290 C98 260 105 245 120 240Z" />
      <Rim d="M122 246 C92 254 92 300 112 330 C120 342 130 350 142 354" />
      <path d="M680 765 C700 830 730 840 760 838 C790 835 805 810 818 793Z" />
      <path d="M690 772 C702 815 716 826 736 834" strokeWidth="10" fill="none" />
      <path d="M290 465 L240 560 C215 600 225 640 250 650 C280 660 305 655 322 665 C310 700 280 725 230 730 C190 720 170 680 150 655 L125 655 C120 720 150 790 180 810 C220 820 270 790 310 803 C350 840 340 900 290 950 C250 985 210 990 172 985 C200 1010 260 1025 300 1018 C350 1000 370 950 420 900 L510 805 L570 745 L500 680 L420 540Z" />
      <path d="M240 602 L412 545 M503 725 L510 805" strokeWidth="3" />
      <Rim d="M288 465 L236 560 C218 600 226 626 248 644" />
      <Rim d="M136 660 C132 722 156 786 190 802" />
      <path d="M318 668 C308 700 280 722 240 728" fill="none" strokeWidth="14" />
      <path d="M315 810 C346 850 335 900 285 948 C255 976 220 984 185 986" fill="none" strokeWidth="18" />
      <path d="M315 810 C346 850 335 900 285 948 C255 976 220 984 185 986" fill="none" strokeWidth="7" stroke="#777" />
      <path d="M470 580 L480 720 L885 802 L862 700 L550 600Z" fill="#a4a3a1" />
      <path d="M1185 490 C1230 430 1240 330 1290 285 C1320 262 1360 262 1375 290 C1400 340 1405 440 1408 560 L1190 530Z" />
      <Rim d="M1182 490 C1228 430 1236 335 1282 290 C1300 274 1312 272 1325 272" />
      <path d="M880 740 L1080 790 L1056 850 C1048 920 1050 960 990 955 L905 830Z" />
      <path d="M905 830 L990 950" />
      <path d="M908 796 L980 768" strokeWidth="3" />
      <path d="M1090 900 L1085 990 C1060 1040 1080 1065 1110 1070 C1150 1070 1175 1020 1178 980 L1172 885Z" />
      <path d="M1118 895 L1126 1068" strokeWidth="3" />
      <path d="M1095 905 L1090 990 C1072 1030 1078 1050 1095 1062" strokeWidth="14" fill="none" />
      <path d="M880 950 L800 1100 C775 1150 780 1180 830 1197 C860 1205 880 1180 890 1160 L945 1050Z" />
      <Rim d="M882 955 L802 1098 C784 1140 784 1172 815 1190" />
      <path d="M1290 800 L1500 830 L1640 960 L1622 1060 C1615 1105 1600 1114 1580 1110 C1545 1100 1520 1068 1485 1069 C1440 1080 1420 1150 1400 1200 L1368 1255 C1355 1290 1340 1305 1315 1305 C1270 1305 1250 1280 1250 1180 C1260 1100 1240 1000 1245 950 C1255 880 1270 830 1290 800Z" />
      <path d="M1300 815 L1360 1060 L1368 1255" fill="none" />
      <path d="M1575 950 L1580 1108" strokeWidth="3" />
    </g>
  )
}

function MidBack() {
  return (
    <g transform="translate(960 650) scale(0.33333 0.34435)" stroke="#000" strokeWidth="5" fill={PLATE}>
      <path d="M265 545 C320 460 315 370 330 270 C345 180 350 120 390 75 C430 50 465 80 468 140 L470 200 L460 330 L455 545Z" />
      <path d="M330 353 L457 328" />
      <Rim d="M270 530 C318 465 314 360 326 260 L354 145" />
      <Rim d="M368 118 C382 84 396 72 420 70" />
      <path d="M745 510 L748 200 C760 120 780 80 800 76 C830 75 835 110 845 180 C865 260 850 310 835 360 C820 430 812 460 810 510Z" />
      <Rim d="M744 500 L748 350 L756 190 C766 130 782 88 804 80" />
      <path d="M360 110 L400 118 C520 165 650 190 760 203 L832 212 V240 L800 244 C650 230 500 190 370 145Z" fill="#a5a5a3" />
      <path d="M400 122 C520 165 640 188 745 202 M765 208 L825 214" strokeWidth="13" fill="none" />
      <path d="M365 128 C500 180 650 214 800 230 V244 M560 175 V200" strokeWidth="2.500" fill="none" />
      <path d="M268 200 L330 205 L370 222 C440 238 480 250 540 262 C640 286 700 296 760 308 L820 315 L908 328 V352 L880 362 C700 345 540 305 400 262 L268 228Z" fill="#a5a5a3" />
      <path d="M272 204 L330 213 M365 226 C480 260 640 292 742 308 M765 318 L895 333" strokeWidth="13" fill="none" />
      <path d="M268 216 C420 254 640 318 880 346 V362 M528 272 V300" strokeWidth="2.500" fill="none" />
      <path d="M1275 590 C1295 545 1340 540 1350 630Z" />
      <path d="M1278 585 C1288 566 1302 560 1318 558" strokeWidth="14" fill="none" />
      <path d="M430 860 L450 940 L690 940 L810 1030 C820 1120 815 1180 770 1195 C730 1195 720 1140 690 1147 C640 1155 610 1160 580 1190 C550 1230 540 1270 525 1285 C505 1330 490 1360 460 1357 C430 1340 430 1260 400 1170 C370 1070 375 960 400 880Z" />
      <path d="M434 875 L525 1285" />
      <path d="M640 950 L642 1155" strokeWidth="3" />
      <path d="M693 1148 C715 1150 722 1190 755 1194" strokeWidth="14" fill="none" />
      <path d="M105 1036 C140 1040 160 1072 200 1078" strokeWidth="8" fill="none" />
      <path d="M693 950 L695 1008 L935 1056 V970Z" fill="#a4a3a1" />
      <path d="M975 905 L1040 850 L1045 960 L1360 1180 C1358 1270 1330 1310 1310 1307 C1285 1290 1280 1245 1255 1247 C1200 1265 1100 1330 1062 1380 C1030 1430 1010 1510 980 1505 C920 1500 925 1440 935 1300 V1000 C945 940 950 920 975 905Z" />
      <path d="M980 950 L1062 1380" />
      <path d="M965 1130 L1138 1038 M1163 1040 V1297" strokeWidth="3" />
      <path d="M1262 1250 C1280 1260 1280 1290 1302 1306" strokeWidth="16" fill="none" />
    </g>
  )
}

function FootBack() {
  return (
    <g transform="translate(1440 800) scale(0.33333)" stroke="#000" strokeWidth="5" fill={PLATE}>
      <path d="M897 860 V1020 C905 1050 930 1052 955 1050 C985 1030 988 960 985 870Z" />
      <Rim d="M908 872 V1010 C910 1030 916 1040 925 1046" />
      <path d="M670 830 L825 800 L880 870 C870 920 865 960 855 962 C835 930 830 890 810 890 C790 930 785 970 783 1030 C780 1090 765 1125 745 1123 C710 1115 705 1090 715 1020 C735 970 745 955 730 950 C710 960 700 1010 685 1060Z" />
      <path d="M730 955 C728 1010 710 1060 722 1112" strokeWidth="26" fill="none" />
      <path d="M730 960 C728 1010 710 1060 722 1108" strokeWidth="17" stroke="#8b8b89" fill="none" />
      <path d="M818 892 C830 910 835 945 848 956" strokeWidth="18" fill="none" />
      <path d="M818 892 C830 910 835 945 848 956" strokeWidth="9" stroke="#8b8b89" fill="none" />
      <path d="M825 780 V857 L1000 890 V740Z" fill="#a4a3a1" />
      <path d="M900 500 C930 440 960 415 985 422 C1005 430 1010 450 1008 470 L920 530Z" />
      <Rim d="M905 500 C925 460 945 430 975 424" />
    </g>
  )
}

function HeadFront() {
  return (
    <g transform="translate(500 650) scale(0.33333)" stroke="#000" strokeWidth="5" fill={PLATE}>
      <Rim d="M856 612 C842 700 874 720 896 790 C908 850 888 900 886 940" />
      <path d="M866 592 L930 578 L1010 572 L1100 548 L1185 490" fill="none" strokeWidth="12" />
      <path d="M888 600 L925 590 L930 636 L890 626Z" />
      <path d="M1370 692 L1408 690 L1410 725 L1350 715Z" />
      <Rim d="M1368 706 C1330 730 1310 750 1298 785" />
      <path d="M1365 695 L1450 670 L1530 650" fill="none" strokeWidth="12" />
      <Rim d="M1288 812 C1254 880 1248 950 1258 1050 C1264 1150 1252 1250 1268 1275 C1276 1290 1288 1298 1300 1300" />
      {[200, 262, 325, 392, 425, 450, 483].map((x, i) => (
        <g key={x} fill="none">
          <path d={`M${x} ${220 - i * 12} L${x + 8} ${290 - i * 16}`} strokeWidth="20" />
          <path d={`M${x} ${222 - i * 12} L${x + 8} ${290 - i * 16}`} strokeWidth="7" stroke="#666" />
        </g>
      ))}
      <path d="M122 240 L190 222 M205 214 L255 204 M270 196 L318 185 M335 180 L385 168 M470 150 C500 128 540 124 570 126" fill="none" strokeWidth="9" />
    </g>
  )
}

function MidFront() {
  return (
    <g transform="translate(960 650) scale(0.33333 0.34435)" stroke="#000" strokeWidth="5" fill={PLATE}>
      <path d="M0 672 L80 655 L150 640 L205 605 L265 545 M480 780 L600 748 L660 705 M1045 850 L1095 822 L1150 790 L1205 745" fill="none" strokeWidth="12" />
      <Stub x={250} y={566} />
      <Stub x={212} y={606} />
      <Stub x={733} y={562} />
      <Stub x={710} y={636} />
      <Stub x={676} y={692} />
      <Stub x={1268} y={612} />
      <Stub x={1243} y={674} />
      <Stub x={1212} y={732} />
      <path d="M450 825 L488 795 L490 845 L435 848Z M1165 795 L1198 765 V812Z M1100 830 L1138 806 V838Z" />
      <Rim d="M480 790 C455 800 438 820 430 845" />
      <Rim d="M422 864 C384 960 380 1080 402 1170 C432 1240 428 1300 446 1348" />
      <path d="M985 908 L1040 858 V960 L990 960Z" stroke="none" />
      <Rim d="M1040 856 C1010 870 990 885 978 905" />
      <Rim d="M962 928 C944 980 947 1000 947 1200 L938 1440 C936 1480 946 1496 962 1500" />
      <path d="M985 912 L1000 955 L988 968" fill="none" />
      <path d="M1040 862 V970" />
    </g>
  )
}

function FootFront() {
  return (
    <g transform="translate(1440 800) scale(0.33333)" stroke="#000" strokeWidth="5" fill={PLATE}>
      <Stub x={820} y={566} />
      <g transform="translate(778 634) scale(1.4)">
        <Stub x={0} y={0} />
      </g>
      <path d="M720 705 L740 682 H760 L750 700Z" />
      <path
        fillRule="evenodd"
        d="M1050 600 L1090 528 L1180 462 L1280 345 C1310 290 1350 190 1400 172 C1445 168 1470 220 1469 300 C1468 420 1440 560 1430 680 C1425 800 1440 880 1430 940 C1415 1040 1390 1100 1360 1103 C1320 1095 1320 1040 1335 940 C1345 850 1375 790 1392 730 C1400 670 1395 615 1370 613 C1330 620 1340 700 1330 780 L1325 900 C1300 860 1290 770 1272 712 L1262 780 L1258 920 C1245 1050 1215 1120 1195 1124 C1160 1110 1155 1080 1165 950 C1170 850 1200 800 1225 730 C1230 670 1225 620 1195 613 C1165 630 1170 700 1168 800 C1165 900 1150 990 1120 1005 C1085 990 1085 960 1090 880 C1095 830 1130 790 1135 740 C1125 720 1100 780 1085 850 L1075 880Z"
      />
      <path d="M1262 470 L1248 760 M1395 652 L1428 628 M1280 742 L1332 704 M1125 868 L1165 838 M1040 930 L1080 905" strokeWidth="3" />
      <Rim d="M1378 625 C1392 720 1352 820 1348 940 C1338 1020 1332 1070 1348 1096" tone="#90908e" />
      <Rim d="M1206 625 C1226 720 1186 820 1182 920 C1170 1020 1168 1090 1184 1114" tone="#90908e" />
      <Rim d="M1130 740 C1128 830 1100 900 1100 994" tone="#90908e" />
      <path d="M1278 740 C1285 800 1290 870 1312 900" strokeWidth="22" fill="none" />
      <path d="M1278 745 C1285 800 1290 870 1312 896" strokeWidth="13" stroke="#8b8b89" fill="none" />
      <path d="M1240 758 L1282 764 L1275 932 L1260 942 L1227 935Z" fill="#a4a3a1" />
      <path d="M1268 770 L1260 940" />
      <Rim d="M1290 345 C1312 290 1350 200 1402 178" tone="#d6d6d4" />
      {[
        [1102, 540], [1143, 500], [1185, 474], [1230, 446], [1256, 416], [1279, 386], [1303, 350],
      ].map(([x, y]) => (
        <g key={x}>
          <path d={`M${x - 7} ${y} H${x + 7} V${y + 58} L${x - 5} ${y + 68}Z`} fill="#6f6f6d" />
          <path d={`M${x - 22} ${y - 14} L${x - 4} ${y - 28} L${x + 10} ${y - 24} L${x - 6} ${y - 4}Z`} fill="#4a4a4a" />
        </g>
      ))}
      <path d="M1085 525 C1030 560 1000 610 998 660 C990 740 1005 830 1015 900 C1020 1000 1010 1100 985 1260 C970 1350 975 1395 1020 1402 C1050 1400 1080 1350 1093 1270 C1105 1180 1085 1050 1076 950 C1072 850 1068 700 1062 595Z" />
      <Rim d="M1082 534 C1024 580 1002 660 1012 780 C1032 900 1036 1000 1018 1130 C1002 1250 976 1330 992 1388" />
      <path d="M640 705 C600 710 575 760 568 860 C565 960 580 1000 562 1150 C548 1260 545 1325 590 1332 C610 1325 630 1290 632 1240 C628 1150 630 1070 658 1036 C672 1060 675 1110 680 1152 C690 1100 692 1020 680 960 L655 710Z" />
      <path d="M598 1020 L800 880 M655 710 L680 960" strokeWidth="4" />
      <path d="M658 1045 C655 1080 658 1120 664 1148" strokeWidth="28" fill="none" />
      <path d="M658 1052 C655 1080 658 1120 664 1144" strokeWidth="18" stroke="#8b8b89" fill="none" />
      <Rim d="M640 710 C600 712 580 770 574 860 C570 960 586 1000 572 1150 C562 1230 554 1290 566 1324" />
    </g>
  )
}

function Scene() {
  return (
    <svg viewBox="262 320 2086 1430" preserveAspectRatio="xMidYMid slice" className="absolute inset-0 size-full" strokeLinejoin="round">
      <Grid />
      <HeadBack />
      <MidBack />
      <FootBack />
      {SLATS.map((s, i) => (
        <Slat key={i} {...s} />
      ))}
      <Slat pts={LOW_SLAT} fill="#8e8e8c" depth={33} edge="#9a9a98" />
      <HeadFront />
      <MidFront />
      <FootFront />
      <path d="M334 1623 V1680 L385 1690 M334 1680 L364 1663" stroke="#6b6b6b" strokeWidth="1.500" fill="none" />
      <g fill="#6a6a6a" className="font-['Inter'] text-[26px]">
        <text x="339" y="1624">z</text>
        <text x="369" y="1661">y</text>
        <text x="390" y="1691">x</text>
      </g>
    </svg>
  )
}

/* ---------- layout sections ---------- */

function MenuBar() {
  return (
    <nav className="flex h-[50px] shrink-0 items-center bg-black px-[38px] pb-0.5 text-[26px] text-[#ececec]">
      <FaApple size={31} />
      <ul className="ml-9 flex items-center gap-10">
        <li><button className="font-bold">Rhino 7</button></li>
        {MENUS.map((m) => (
          <li key={m}><button>{m}</button></li>
        ))}
      </ul>
      <div className="ml-auto flex items-center">
        <svg viewBox="0 0 34 34" className="size-[33px]"><circle cx="17" cy="17" r="14" fill="none" stroke="#eee" strokeWidth="4" /><circle cx="17" cy="17" r="9" fill="#eee" /><path d="M17 11 V23" stroke="#000" strokeWidth="4" /></svg>
        <Bluetooth className="ml-9" size={29} strokeWidth={2} />
        <CirclePlay className="ml-9" size={30} strokeWidth={2} />
        <Volume2 className="ml-9" size={36} fill="#eee" strokeWidth={1.5} />
        <svg viewBox="0 0 50 26" className="ml-9 h-[26px] w-[50px]">
          <rect x="1.500" y="1.500" width="43" height="23" rx="6" fill="none" stroke="#888" strokeWidth="2" />
          <rect x="5" y="5" width="36" height="16" rx="3" fill="#eee" />
          <path d="M47 9 Q50 13 47 17Z" fill="#888" />
          <path d="M27 0 L14 15 H22 L19 26 L32 11 H24Z" fill="#eee" stroke="#000" strokeWidth="2" />
        </svg>
        <Search className="ml-9" size={29} strokeWidth={2.2} />
        <svg viewBox="0 0 28 28" className="ml-9 size-7">
          <rect x="1" y="1" width="26" height="11" rx="5.500" fill="none" stroke="#eee" strokeWidth="2" /><circle cx="7" cy="6.500" r="4" fill="#eee" />
          <rect x="0" y="15" width="28" height="13" rx="6.500" fill="#eee" /><circle cx="21" cy="21.500" r="4" fill="#000" />
        </svg>
        <svg viewBox="0 0 28 28" className="ml-9 size-7">
          <circle cx="14" cy="14" r="14" fill="#3c4a78" />
          <path d="M14 14 Q2 2 3 20 Q8 26 14 14Z" fill="#d0457c" />
          <path d="M14 14 Q8 2 18 2 Q26 8 14 14Z" fill="#4fa58a" />
          <path d="M14 14 Q28 8 25 20 Q18 26 14 14Z" fill="#4a8fe0" />
          <circle cx="14" cy="14" r="4" fill="#fff" />
        </svg>
        <time className="ml-8 whitespace-pre">Wed Dec 14  12:06 AM</time>
      </div>
    </nav>
  )
}

function SidebarToggle({ side }: { side: 'left' | 'right' }) {
  return (
    <button aria-label={`Toggle ${side} sidebar`} className={clsx('h-[39px] w-10 border-[3px] border-[#2f7cf6]', side === 'left' ? 'border-l-[12px]' : 'border-r-[12px]')} />
  )
}

const MODES = [
  { label: 'Grid Snap', on: true },
  { label: 'Ortho', on: false },
  { label: 'Planar', on: false },
  { label: 'SmartTrack', on: true },
  { label: 'Gumball', on: true },
  { label: 'History', on: false },
]

function TitleBar() {
  const [modes, setModes] = useState(MODES)
  return (
    <header className="relative shrink-0">
      <div className="flex h-[54px] items-center justify-center gap-2 text-[26px] text-[#7d7d7d]">
        <div className="absolute left-[14px] flex gap-4">
          <button aria-label="Close" className="grid size-6 place-items-center rounded-full bg-[#ed6a5e]"><span className="size-2 rounded-full bg-[#8c1a10]" /></button>
          <button aria-label="Minimize" className="size-6 rounded-full bg-[#f4bf4f]" />
          <button aria-label="Zoom" className="size-6 rounded-full bg-[#61c554]" />
        </div>
        <svg viewBox="0 0 24 30" className="mr-1 h-[30px] w-6">
          <path d="M0 0 H17 L24 7 V30 H0Z" fill="#f0f0f0" />
          <path d="M0 3 Q8 1 10 8 L18 14 L24 12 V24 L17 20 L10 20 L0 12Z" fill="#111" />
          <path d="M8 2 L18 16 L14 4Z M3 10 L10 16 L6 9Z" fill="#ccc" />
        </svg>
        <h1 className="text-[27px] font-bold text-[#b8b8b8]">Body_Bench_Alignmentv11_duplicate.3dm</h1>
        <span>— Edited</span>
      </div>
      <div className="flex h-[62px] items-center pr-[22px] pb-4 pl-[22px]">
        <SidebarToggle side="left" />
        <div className="ml-[89px] flex items-center gap-[14px]">
          {modes.map((m) => (
            <button
              key={m.label}
              aria-pressed={m.on}
              onClick={() => setModes(modes.map((o) => (o.label === m.label ? { ...o, on: !o.on } : o)))}
              className={clsx('h-[30px] rounded-lg text-[25px] leading-[30px]', m.on ? 'bg-[#5a5a5a] px-[21px] font-bold text-white' : 'px-[27px] font-semibold text-[#a9a9a9]')}
            >
              {m.label}
            </button>
          ))}
        </div>
        <div className="ml-auto flex items-center gap-[18px]">
          <span className="mr-4 flex">
            <Ico label="Selection filter">
              <ellipse cx="22" cy="9" rx="16" ry="4" />
              <path d="M6 9 Q7 18 18 27 V41 H25 V27 Q37 18 38 9 M34 1 H43 V8 M1 36 V43 H8" />
            </Ico>
          </span>
          <Ico label="Record history" size="size-10">
            <circle cx="20" cy="22" r="18" stroke="#777" />
            <path d="M20 22 H42" />
            <rect x="16" y="18" width="8" height="8" fill="#b4b4b4" />
          </Ico>
          <Ico label="Snap target">
            <circle cx="22" cy="22" r="20" />
            <circle cx="22" cy="22" r="11" />
          </Ico>
          <button className="h-[36px] w-[384px] rounded-lg border-2 border-[#414141] pl-8 text-[22px] leading-[30px] text-[#b5b5b5]">333planes</button>
        </div>
        <div className="ml-[567px]">
          <SidebarToggle side="right" />
        </div>
      </div>
    </header>
  )
}

function ToolTabs() {
  const [tab, setTab] = useState('Set View')
  return (
    <div role="tablist" className="flex h-[34px] shrink-0 border-t-2 border-b-2 border-t-black border-b-[#8d8d8d] bg-[#424242] pl-[10px] text-[19px] font-bold">
      {TOOL_TABS.map((t, i) => (
        <button
          key={t}
          role="tab"
          aria-selected={t === tab}
          onClick={() => setTab(t)}
          className={clsx(
            'h-[32px] rounded-t-lg border-r-2 border-[#8d8d8d] px-5 pb-2 leading-6 whitespace-nowrap',
            i === 0 && 'border-l-2',
            t === tab ? 'bg-[#323232] text-[#2f7cf6]' : 'text-white',
          )}
        >
          {t}
        </button>
      ))}
    </div>
  )
}

function LeftSidebar() {
  return (
    <aside className="flex w-[260px] shrink-0 flex-col border-r-2 border-[#7f7f7f] bg-[#1b1b1b]">
      <div className="h-[52px] shrink-0 border-b-2 border-[#444] bg-[#323232]" />
      <div className="px-4 pt-[22px]">
        <input aria-label="Command" placeholder="Command" className="h-[38px] w-full border border-b-2 border-[#3a3a3a] border-b-[#5a5a5a] bg-[#262626] px-1.5 text-[25px] placeholder:text-[#666]" />
      </div>
      <div className="mt-[25px] grid h-[348px] shrink-0 auto-rows-[44px] grid-cols-[repeat(4,44px)] gap-4 overflow-hidden border-b-3 border-[#7f7f7f] pl-[5px]">
        {PALETTE.map((p) => (
          <Ico key={p.label} label={p.label} sub={p.sub}>{p.art}</Ico>
        ))}
      </div>
      <div className="pt-[10px] text-[22px]">
        <div className="pl-[34px]">
          <Radio name="osnap" label="Persistent" on />
          <Radio name="osnap" label="One shot" />
        </div>
        <div className="mt-[6px] pl-[38px]">
          {OSNAPS.map((o) => (
            <Check key={o.label} {...o} className="h-10" />
          ))}
          <Check label="Disable all" className="mt-9 h-10" />
        </div>
      </div>
    </aside>
  )
}

const VIEWS = ['Perspective', 'Top', 'Front', 'Right', 'Layouts...']

function Viewport() {
  const [view, setView] = useState('Perspective')
  return (
    <main className="flex min-w-0 flex-1 flex-col">
      <div className="flex h-[50px] shrink-0 items-center bg-[#323232] pb-1 pl-5 text-[#9b9b9b]">
        <button aria-label="Four viewports">
          <svg viewBox="0 0 30 28" className="h-7 w-[30px]" fill="none" stroke="#909090" strokeWidth="1.500"><path d="M1 1 H29 V27 H1Z M15 1 V27 M1 14 H29" /><path d="M1 2 H7 M15 2 H21 M1 15 H7 M15 15 H21" strokeWidth="3" /></svg>
        </button>
        <button aria-label="Single viewport" className="ml-[34px]">
          <svg viewBox="0 0 30 28" className="h-7 w-[30px]" fill="none" stroke="#2f6cd0" strokeWidth="1.500"><path d="M1 1 H29 V27 H1Z" /><path d="M1 2 H7" strokeWidth="3" /></svg>
        </button>
        <div className="ml-7 flex items-center text-[25px]">
          {VIEWS.map((v) => (
            <button key={v} onClick={() => setView(v)} className={clsx('h-7 border-l-2 border-[#777] px-[39px] leading-7', v === view && 'text-[#2f7cf6]')}>
              {v}
            </button>
          ))}
        </div>
      </div>
      <div className="relative min-h-0 flex-1 overflow-hidden bg-[#9da1a9]">
        <Scene />
        <button className="absolute top-[4px] left-[2px] h-[38px] bg-[#1f5695] px-2 text-[25px] leading-[38px] font-bold text-white">{view}</button>
      </div>
    </main>
  )
}

function Bulb({ dim }: { dim?: boolean }) {
  return (
    <svg viewBox="0 0 26 28" className={clsx('h-7 w-[26px]', dim && 'opacity-50')}>
      <path d="M1 7 Q3 0 13 0 Q23 0 25 7 Q25 12 18 17 L17 22 H9 L8 17 Q1 12 1 7Z" fill="#f7b531" />
      <path d="M5 6 Q13 1 21 6 L15 10 L15 18 H11 L11 10Z" fill="#fde9a4" />
      <path d="M9 22 H17 L16 28 H10Z" fill="#d5dae4" />
    </svg>
  )
}

function Lock({ dim }: { dim?: boolean }) {
  return (
    <svg viewBox="0 0 30 28" className={clsx('h-7 w-[30px]', dim && 'opacity-50')}>
      <path d="M15 12 V7 Q15 2 21 2 Q27 2 27 8 V12" fill="none" stroke="#dcdcdc" strokeWidth="4" />
      <path d="M1 13 H24 V28 H1Z" fill="#d98a33" />
      <path d="M2 16 H23 M2 21 H23" stroke="#eab26c" strokeWidth="2" />
      <path d="M1 27 H24 V13" fill="none" stroke="#e8e0d5" strokeWidth="2" />
    </svg>
  )
}

const LAYERS = [
  { name: '333planes', current: true },
  { name: 'og structures', current: false },
]

function LayersPanel() {
  return (
    <section className="flex h-[630px] shrink-0 flex-col border-b-3 border-[#7f7f7f]">
      <div className="h-[176px] shrink-0 bg-[#323232]">
        <div className="relative flex h-12 items-center justify-center pr-8">
          <h2>Panels: Layers</h2>
          <div className="absolute right-0.5"><GearButton label="Panel options" /></div>
        </div>
        <div className="flex flex-wrap justify-center gap-4 pt-[6px] pr-[33px] pl-[21px]">
          {PANEL_ICONS.map((p) => (
            <Ico key={p.label} label={p.label}>{p.active ? <g stroke="#2f7cf6">{p.art}</g> : p.art}</Ico>
          ))}
          {PANEL_ICONS_2.map((p) => (
            <Ico key={p.label} label={p.label}>{p.art}</Ico>
          ))}
        </div>
      </div>
      <div className="min-h-0 flex-1 overflow-hidden">
        <table className="w-full table-fixed text-left">
          <colgroup>
            <col />
            <col className="w-[46px]" />
            <col className="w-[46px]" />
            <col className="w-[46px]" />
            <col className="w-[60px]" />
            <col className="w-[48px]" />
            <col className="w-[43px]" />
          </colgroup>
          <thead>
            <tr className="h-[54px] border-b-2 border-[#353535] text-white">
              <th className="pl-[58px] font-semibold">Name</th>
              {['Current', 'On', 'Lock', 'Color', 'Material'].map((h) => (
                <th key={h} aria-label={h}><div className="h-8 border-l-2 border-[#3c3c3c]" /></th>
              ))}
              <th className="overflow-hidden font-semibold whitespace-nowrap"><div className="h-8 border-l-2 border-[#3c3c3c] pl-2 leading-8">Linetype</div></th>
            </tr>
            <tr className="h-[9px]" />
          </thead>
          <tbody>
            {LAYERS.map((l) => (
              <tr key={l.name} className="h-[34px]">
                <td className="pl-[54px]">{l.name}</td>
                <td><input type="radio" name="layer" aria-label={`${l.name} current`} defaultChecked={l.current} className={clsx('mx-auto block', radioClass)} /></td>
                <td><div className="grid place-items-center"><Bulb dim={l.current} /></div></td>
                <td><div className="grid place-items-center"><Lock dim={l.current} /></div></td>
                <td><div className="mx-auto size-7 bg-black" /></td>
                <td><div className="ml-1 size-7 rounded-full border-2 border-black bg-white" /></td>
                <td className="overflow-hidden pl-2 whitespace-nowrap">Continuous</td>
              </tr>
            ))}
          </tbody>
        </table>
      </div>
      <div className="flex h-[64px] shrink-0 items-center border-t-2 border-[#353535] pl-9 text-[#999]">
        <div className="flex h-8 w-[100px] items-center rounded-lg border-2 border-[#2a2a2a]">
          <button aria-label="Add layer" className="grid flex-1 place-items-center"><svg viewBox="0 0 18 18" className="size-[18px]" stroke="#8d8d8d" strokeWidth="2"><path d="M9 0 V18 M0 9 H18" /></svg></button>
          <span className="h-5 w-0.5 bg-[#2a2a2a]" />
          <button aria-label="Remove layer" className="grid flex-1 place-items-center"><svg viewBox="0 0 18 18" className="size-[18px]" stroke="#555" strokeWidth="2"><path d="M0 9 H18" /></svg></button>
        </div>
        <button aria-label="Layer tools" className="ml-8 flex h-8 w-16 items-center justify-center gap-2 rounded-lg bg-[#5a5a5a] text-[#262626]">
          <BsGearFill size={20} />
          <ChevronDown size={16} strokeWidth={4} className="text-white" />
        </button>
      </div>
    </section>
  )
}

function PropertiesPanel() {
  const field = 'h-8 border border-b-2 border-[#353535] border-b-[#5a5a5a] bg-[#262626] px-1.5'
  return (
    <section className="min-h-0 flex-1 overflow-hidden">
      <div className="h-[119px] bg-[#323232]">
        <div className="relative flex h-[50px] items-center justify-center pr-8">
          <h2>Properties: Viewport</h2>
          <div className="absolute right-0.5"><GearButton label="Properties options" /></div>
        </div>
        <div className="flex justify-center gap-4 pt-1 pr-3">
          <Ico label="Viewport properties"><g stroke="#2f7cf6" strokeWidth="2.500"><Camera /></g></Ico>
          <Ico label="Texture mapping"><path d="M1 2 H43 V42 H1Z" strokeWidth="2.500" /><path d="M6 7 H38 V37 H6Z M10 12 H34 V32 H10Z" stroke="#777" strokeWidth="1.500" /></Ico>
          <Ico label="Linked objects"><circle cx="12" cy="31" r="11" /><circle cx="25" cy="19" r="8" /><circle cx="34" cy="9" r="7" /></Ico>
        </div>
      </div>
      <div className="pr-4 pl-4">
        <div className="flex h-[54px] items-end">
          <label htmlFor="vp-title" className="w-[92px] pb-0.5 text-right">Title:</label>
          <input id="vp-title" defaultValue="Perspective" className={clsx(field, 'mr-6 ml-[18px] min-w-0 flex-1')} />
        </div>
        <div className="flex h-[60px] items-center pt-0.5">
          <span className="w-[92px] text-right">Size:</span>
          <span className="ml-[18px]">2086 x 1430</span>
        </div>
        <Check label="Locked" className="h-7 pl-[40px]" />
        <fieldset className="mt-6 border-t-2 border-[#303030] pt-[15px]">
          <h3 className="h-8 leading-[30px]">Projection</h3>
          <div className="pl-[42px]">
            <Radio name="projection" label="Parallel" />
            <Radio name="projection" label="Perspective" on />
            <Radio name="projection" label="Two point perspective" />
          </div>
        </fieldset>
        <section className="mt-[45px] border-t-2 border-[#303030] pt-[15px]">
          <h3 className="h-[30px] leading-[30px]">Wallpaper</h3>
          <div className="relative ml-[50px] flex h-11 w-[190px] items-center pt-3">
            <select aria-label="Wallpaper" className="w-full appearance-none bg-transparent">
              <option>Choose...</option>
            </select>
            <span className="pointer-events-none absolute right-0.5"><UpDown /></span>
          </div>
          <div className="pt-1.5 pl-[40px]">
            <Check label="Show wallpaper" disabled className="h-11" />
            <Check label="Show wallpaper as gray scale" disabled className="h-11" />
          </div>
        </section>
        <section className="mt-7 border-t-2 border-[#303030] pt-[16px]">
          <h3 className="h-[30px] leading-[30px]">Camera</h3>
          <div className="grid grid-cols-[167px_116px] items-center gap-x-5 gap-y-[22px] pt-[19px] text-right">
            <label htmlFor="vp-lens">Lens length:</label>
            <input id="vp-lens" defaultValue="50" className={field} />
            <label htmlFor="vp-rot">Rotation:</label>
            <input id="vp-rot" defaultValue="0" className={field} />
          </div>
        </section>
      </div>
    </section>
  )
}

function StatusBar() {
  return (
    <footer className="flex h-[49px] shrink-0 items-center border-t-2 border-black bg-[#323232] pt-2.5 pl-2 text-[22px] text-[#e0e0e0]">
      <button aria-label="Command history"><List size={28} strokeWidth={1.5} className="text-[#aaa]" /></button>
      <span className="ml-1">Command: _Drag</span>
      <div className="ml-auto flex items-center">
        <span>Inches</span>
        <div className="relative ml-8 flex items-center pb-1">
          <select aria-label="Coordinate system" className="h-8 w-[140px] appearance-none rounded-lg border-2 border-[#6c6c6c] bg-transparent px-2 leading-7">
            <option>CPlane</option>
            <option>World</option>
          </select>
          <span className="pointer-events-none absolute right-2.5"><UpDown /></span>
        </div>
        <span className="ml-7 w-[164px]">X: 13.505</span>
        <span className="w-[171px]">Y: -50.940</span>
        <span className="w-[369px]">Z: 0.000</span>
      </div>
    </footer>
  )
}

export default function App() {
  return (
    <div className="flex h-screen flex-col overflow-hidden bg-black font-['Inter','Liberation_Sans',sans-serif] text-[22px] [font-feature-settings:'calt'_0]">
      <MenuBar />
      {/* second window peeking out behind */}
      <div className="h-5 shrink-0 rounded-t-[22px] border-t-2 border-[#555] bg-[#202020]" />
      <div className="-mt-[13px] flex min-h-0 flex-1 flex-col overflow-hidden rounded-t-[22px] rounded-b-[16px] border-x-2 border-t-2 border-[#5c5c5c] border-t-[#777] bg-[#323232]">
        <TitleBar />
        <ToolTabs />
        <div className="flex h-[61px] shrink-0 items-center gap-4 overflow-hidden border-b-3 border-black bg-[#323232] pl-[5px]">
          {VIEW_TOOLS.map((t) => (
            <Ico key={t.label} label={t.label} sub={t.sub}>{t.art}</Ico>
          ))}
        </div>
        <div className="flex min-h-0 flex-1">
          <LeftSidebar />
          <Viewport />
          <aside className="flex w-[530px] shrink-0 flex-col border-l-2 border-[#7f7f7f] bg-[#1b1b1b] text-[22px] text-[#e0e0e0]">
            <LayersPanel />
            <PropertiesPanel />
          </aside>
        </div>
        <StatusBar />
      </div>
    </div>
  )
}
